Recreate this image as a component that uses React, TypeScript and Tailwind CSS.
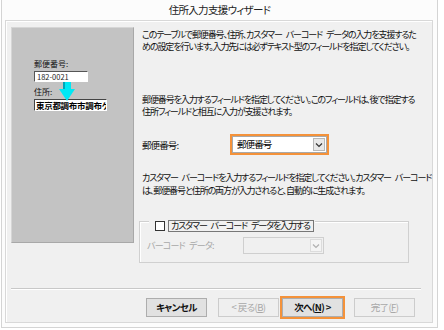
import React from 'react';

const jp = "font-['Noto_Sans_CJK_JP','Noto_Sans',sans-serif] [font-feature-settings:'palt']";

function Chevron({ color = '#333' }: { color?: string }) {
  return (
    <svg width="8" height="6" viewBox="0 0 8 6">
      <polyline points="1,1.5 4,4.5 7,1.5" fill="none" stroke={color} strokeWidth="1.2" />
    </svg>
  );
}

function Select({ value, disabled }: { value?: string; disabled?: boolean }) {
  return (
    <div
      className={`flex h-[17px] items-center justify-between border pl-[4px] pr-[1px] ${
        disabled ? 'w-[81px] border-[#cfcfcf] bg-[#f0f0f0]' : 'w-[95px] border-[#a9a9a9] bg-white'
      }`}
    >
      <span className="text-[9.5px] leading-none tracking-[-0.9px] text-black">{value}</span>
      <span
        className={`flex h-[13px] w-[12px] items-center justify-center border ${
          disabled ? 'border-[#dcdcdc] bg-[#f4f4f4]' : 'border-[#b8b8b8] bg-[#e8e8e8]'
        }`}
      >
        <Chevron color={disabled ? '#b0b0b0' : '#333'} />
      </span>
    </div>
  );
}

function WizardButton({
  children,
  disabled,
  bold,
}: {
  children: React.ReactNode;
  disabled?: boolean;
  bold?: boolean;
}) {
  return (
    <div
      className={`flex h-[19px] w-[61px] items-center justify-center border text-[9.5px] tracking-[-0.6px] ${
        disabled
          ? 'border-[#cccccc] bg-[#efefef] text-[#a8a8a8]'
          : 'border-[#adadad] bg-[#e1e1e1] text-[#111]'
      } ${bold ? 'font-bold' : ''}`}
    >
      {children}
    </div>
  );
}

function Illustration() {
  return (
    <div className="h-[216px] w-[123px] shrink-0 border border-[#a8a8a8] border-l-[#d6d6d6] border-t-[#d6d6d6] bg-[#c3c3c3] pl-[22px] pt-[31px] text-[8px] leading-[10px] text-[#111]">
      <div>郵便番号:</div>
      <div className="mt-[2px] flex h-[11px] w-[54px] items-center border border-[#555] border-b-white border-r-white bg-white pl-[2px] text-[7.5px] text-[#222]">
        182-0021
      </div>
      <div className="flex h-[17px] items-start">
        <span className="mt-[5px]">住所:</span>
        <svg className="relative z-10 ml-[7px]" width="16" height="20" viewBox="0 0 16 20">
          <rect x="4" y="0" width="8" height="8" fill="#00e8f4" />
          <rect x="4" y="0" width="2" height="8" fill="#00a6b8" />
          <polygon points="0,7 16,7 8,19" fill="#00e8f4" />
        </svg>
      </div>
      <div className="flex h-[12px] w-[73px] items-center overflow-hidden whitespace-nowrap border border-[#444] border-b-white border-r-white bg-white pl-[1px] text-[8.5px] font-bold tracking-[-0.3px] text-black">
        東京都調布市調布ケ
      </div>
    </div>
  );
}

export default function App() {
  return (
    <div className={`h-[330px] w-[444px] overflow-hidden bg-white ${jp}`}>
      <div className="ml-px flex h-[328px] w-[437px] flex-col border-x border-b border-[#d4d4d4] bg-[#fcfcfc]">
        <div className="flex h-[20px] items-center justify-center text-[10.5px] tracking-[-0.7px] text-[#222]">
          住所入力支援ウィザード
        </div>
        <div className="ml-[3px] flex h-[303px] w-[428px] flex-col border border-[#d8d8d8] bg-[#f0f0f0] shadow-[inset_1px_1px_0_#ffffff]">
          <div className="flex h-[267px] items-start pl-[5px] pt-[6px]">
            <Illustration />
            <div className="ml-[8px] whitespace-nowrap text-[9px] leading-[12px] tracking-[-1.1px] text-[#111] [word-spacing:3px]">
              <p className="mt-[2px]">
                このテーブルで郵便番号、住所、カスタマー バーコード データの入力を支援するた
                <br />
                めの設定を行います。入力先には必ずテキスト型のフィールドを指定してください。
              </p>
              <p className="mt-[41px]">
                郵便番号を入力するフィールドを指定してください。このフィールドは、後で指定する
                <br />
                住所フィールドと相互に入力が支援されます。
              </p>
              <div className="mt-[16px] flex h-[21px] items-center">
                <span className="w-[88px] text-[9.5px] tracking-[-0.9px]">郵便番号:</span>
                <div className="border-2 border-[#f4923a]">
                  <Select value="郵便番号" />
                </div>
              </div>
              <p className="mt-[16px] leading-[13px]">
                カスタマー バーコードを入力するフィールドを指定してください。カスタマー バーコード
                <br />
                は、郵便番号と住所の両方が入力されると、自動的に生成されます。
              </p>
              <div className="-ml-[3px] mt-[24px] h-[42px] w-[270px] border border-[#d0d0d0] shadow-[inset_1px_1px_0_#ffffff]">
                <div className="-mt-[7px] ml-[9px] inline-flex items-center bg-[#f0f0f0] pl-[6px] pr-px">
                  <span className="h-[10px] w-[10px] border border-[#333] bg-white" />
                  <span className="ml-[3px] border border-[#777] pl-[2px] pr-[3px] leading-[10px]">
                    カスタマー バーコード データを入力する
                  </span>
                </div>
                <div className="mt-[3px] flex items-center pl-[7px]">
                  <span className="w-[96px] tracking-[-0.8px] text-[#a8a8a8]">バーコード データ:</span>
                  <Select disabled />
                </div>
              </div>
            </div>
          </div>
          <div className="ml-[5px] h-[2px] w-[410px] border-b border-t border-[#c8c8c8] border-b-white" />
          <div className="mt-[6px] flex items-center pl-[140px]">
            <WizardButton bold>キャンセル</WizardButton>
            <div className="ml-[11px]">
              <WizardButton disabled>
                &lt; 戻る(<span className="underline">B</span>)
              </WizardButton>
            </div>
            <div className="ml-[1px] border-2 border-[#f4923a]">
              <WizardButton bold>
                次へ(<span className="underline">N</span>) &gt;
              </WizardButton>
            </div>
            <div className="ml-[9px]">
              <WizardButton disabled>
                完了(<span className="underline">F</span>)
              </WizardButton>
            </div>
          </div>
        </div>
      </div>
    </div>
  );
}
